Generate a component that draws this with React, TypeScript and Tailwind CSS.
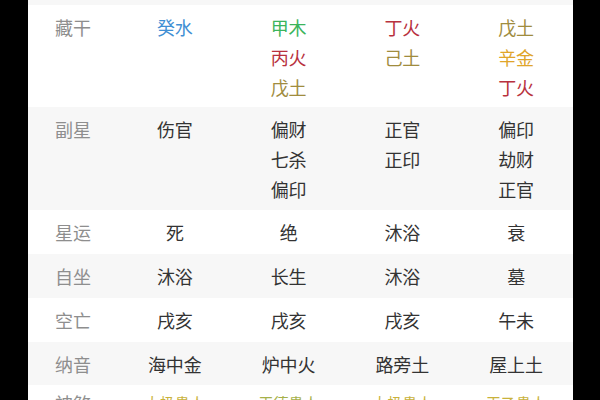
import React from "react";

type Item = { t: string; c?: string };

const BLUE = "text-[#3f8fd4]";
const GREEN = "text-[#3cb45c]";
const RED = "text-[#b8313e]";
const EARTH = "text-[#a08c3e]";
const GOLD = "text-[#e0a52a]";

const rows: { label: string; pad: string; cells: Item[][] }[] = [
  {
    label: "藏干",
    pad: "pt-[7px] pb-[5px]",
    cells: [
      [{ t: "癸水", c: BLUE }],
      [
        { t: "甲木", c: GREEN },
        { t: "丙火", c: RED },
        { t: "戊土", c: EARTH },
      ],
      [
        { t: "丁火", c: RED },
        { t: "己土", c: EARTH },
      ],
      [
        { t: "戊土", c: EARTH },
        { t: "辛金", c: GOLD },
        { t: "丁火", c: RED },
      ],
    ],
  },
  {
    label: "副星",
    pad: "pt-[7px] pb-[6px]",
    cells: [
      [{ t: "伤官" }],
      [{ t: "偏财" }, { t: "七杀" }, { t: "偏印" }],
      [{ t: "正官" }, { t: "正印" }],
      [{ t: "偏印" }, { t: "劫财" }, { t: "正官" }],
    ],
  },
  { label: "星运", pad: "pt-[7px] pb-[7px]", cells: [[{ t: "死" }], [{ t: "绝" }], [{ t: "沐浴" }], [{ t: "衰" }]] },
  { label: "自坐", pad: "pt-[7px] pb-[7px]", cells: [[{ t: "沐浴" }], [{ t: "长生" }], [{ t: "沐浴" }], [{ t: "墓" }]] },
  { label: "空亡", pad: "pt-[7px] pb-[7px]", cells: [[{ t: "戌亥" }], [{ t: "戌亥" }], [{ t: "戌亥" }], [{ t: "午未" }]] },
  { label: "纳音", pad: "pt-[7px] pb-[6px]", cells: [[{ t: "海中金" }], [{ t: "炉中火" }], [{ t: "路旁土" }], [{ t: "屋上土" }]] },
];

export default function App() {
  return (
    <div
      className="w-[600px] h-[400px] bg-black overflow-hidden flex"
      style={{ fontFamily: '"Noto Sans CJK SC", "Noto Sans", sans-serif' }}
    >
      <div className="w-[28px] shrink-0" />
      <div className="w-[545px] shrink-0 flex flex-col bg-white overflow-hidden">
        <div className="h-[5px] shrink-0 bg-[#f7f7f7]" />
        {rows.map((r, i) => (
          <div
            key={r.label}
            className={`grid grid-cols-[90px_1fr_1fr_1fr_1fr] shrink-0 ${r.pad} text-[18px] leading-[30px] ${
              i % 2 === 0 ? "bg-white" : "bg-[#f7f7f7]"
            }`}
          >
            <div className="text-center text-[#8e8e8e]">{r.label}</div>
            {r.cells.map((cell, j) => (
              <div key={j} className="flex flex-col items-center">
                {cell.map((it, k) => (
                  <div key={k} className={it.c ?? "text-[#333333]"}>
                    {it.t}
                  </div>
                ))}
              </div>
            ))}
          </div>
        ))}
        <div className="grid grid-cols-[90px_1fr_1fr_1fr_1fr] shrink-0 pt-[6px] text-[15px] leading-[24px] bg-white">
          <div className="text-center text-[18px] text-[#8e8e8e]">神煞</div>
          <div className="text-center text-[#c9b23c]">太极贵人</div>
          <div className="text-center text-[#a6b14a]">天德贵人</div>
          <div className="text-center text-[#c9b23c]">太极贵人</div>
          <div className="text-center text-[#c9b23c]">天乙贵人</div>
        </div>
      </div>
      <div className="flex-1" />
    </div>
  );
}
